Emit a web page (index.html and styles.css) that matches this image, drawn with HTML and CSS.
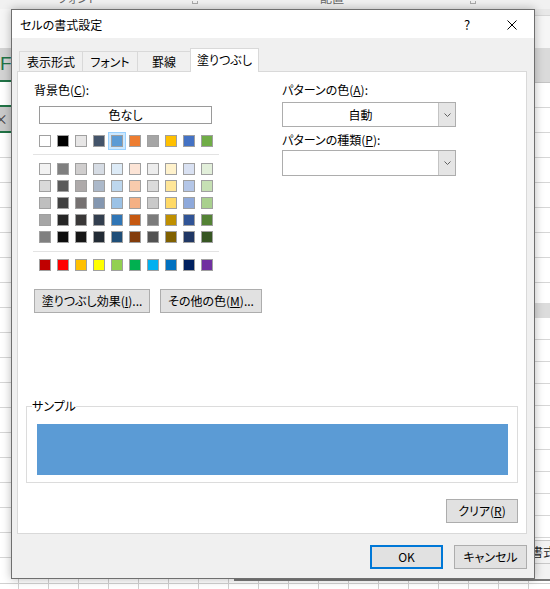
FILE: index.html
```html
<!DOCTYPE html>
<html lang="ja">
<head>
<meta charset="utf-8">
<title>セルの書式設定</title>
<link rel="stylesheet" href="styles.css">
</head>
<body>
<div class="sheet">
  <div class="ribbon">
    <span></span>
    <span class="grp">フォント</span>
    <span class="launcher"></span>
    <span class="grp">配置</span>
    <span class="launcher"></span>
  </div>
  <div class="middle">
    <div class="strip strip-left">
      <div class="cell l-top"></div>
      <div class="cell l-head">F</div>
      <div class="cell l-sel"></div>
      <div class="cell l-fx">×</div>
      <div class="cell l-rows"></div>
    </div>
    <div class="center"></div>
    <div class="strip strip-right">
      <div class="cell r-a"></div>
      <div class="cell r-b"></div>
      <div class="cell r-head"></div>
      <div class="cell r-rows1"></div>
      <div class="cell r-band"></div>
      <div class="cell r-rows2"></div>
      <div class="cell r-fmt">書式</div>
      <div class="cell r-end"></div>
    </div>
  </div>
  <div class="bottom-strip">
    <div class="tabbar-edge"></div>
  </div>
</div>

<div class="dialog">
  <div class="titlebar">
    <span class="title">セルの書式設定</span>
    <span class="help">?</span>
    <span class="close"><svg width="10" height="10" viewBox="0 0 10 10"><path d="M0.5 0.5 L9.5 9.5 M9.5 0.5 L0.5 9.5" stroke="#000" stroke-width="1" fill="none"/></svg></span>
  </div>
  <div class="tabs">
    <div class="tab t1">表示形式</div>
    <div class="tab t2">フォント</div>
    <div class="tab t3">罫線</div>
    <div class="tab t4 active">塗りつぶし</div>
  </div>
  <div class="panel">
    <div class="cols">
      <div class="left">
        <div class="label">背景色(<u>C</u>):</div>
        <div class="nocolor">色なし</div>
        <div class="swatches">
          <div class="grid">
            <span class="sw" style="background:#FFFFFF"></span>
            <span class="sw" style="background:#000000"></span>
            <span class="sw" style="background:#E7E6E6"></span>
            <span class="sw" style="background:#44546A"></span>
            <span class="sw selected" style="background:#5B9BD5"></span>
            <span class="sw" style="background:#ED7D31"></span>
            <span class="sw" style="background:#A5A5A5"></span>
            <span class="sw" style="background:#FFC000"></span>
            <span class="sw" style="background:#4472C4"></span>
            <span class="sw" style="background:#70AD47"></span>
          </div>
          <div class="sep"></div>
          <div class="grid shades">
            <span class="sw" style="background:#F2F2F2"></span>
            <span class="sw" style="background:#7F7F7F"></span>
            <span class="sw" style="background:#D0CECE"></span>
            <span class="sw" style="background:#D6DCE4"></span>
            <span class="sw" style="background:#DDEBF7"></span>
            <span class="sw" style="background:#FCE4D6"></span>
            <span class="sw" style="background:#EDEDED"></span>
            <span class="sw" style="background:#FFF2CC"></span>
            <span class="sw" style="background:#D9E1F2"></span>
            <span class="sw" style="background:#E2EFDA"></span>

            <span class="sw" style="background:#D9D9D9"></span>
            <span class="sw" style="background:#595959"></span>
            <span class="sw" style="background:#AEAAAA"></span>
            <span class="sw" style="background:#ACB9CA"></span>
            <span class="sw" style="background:#BDD7EE"></span>
            <span class="sw" style="background:#F8CBAD"></span>
            <span class="sw" style="background:#DBDBDB"></span>
            <span class="sw" style="background:#FFE699"></span>
            <span class="sw" style="background:#B4C6E7"></span>
            <span class="sw" style="background:#C6E0B4"></span>

            <span class="sw" style="background:#BFBFBF"></span>
            <span class="sw" style="background:#404040"></span>
            <span class="sw" style="background:#757171"></span>
            <span class="sw" style="background:#8497B0"></span>
            <span class="sw" style="background:#9BC2E6"></span>
            <span class="sw" style="background:#F4B084"></span>
            <span class="sw" style="background:#C9C9C9"></span>
            <span class="sw" style="background:#FFD966"></span>
            <span class="sw" style="background:#8EA9DB"></span>
            <span class="sw" style="background:#A9D08E"></span>

            <span class="sw" style="background:#A6A6A6"></span>
            <span class="sw" style="background:#262626"></span>
            <span class="sw" style="background:#3A3838"></span>
            <span class="sw" style="background:#333F4F"></span>
            <span class="sw" style="background:#2F75B5"></span>
            <span class="sw" style="background:#C65911"></span>
            <span class="sw" style="background:#7B7B7B"></span>
            <span class="sw" style="background:#BF8F00"></span>
            <span class="sw" style="background:#305496"></span>
            <span class="sw" style="background:#548235"></span>

            <span class="sw" style="background:#808080"></span>
            <span class="sw" style="background:#0D0D0D"></span>
            <span class="sw" style="background:#161616"></span>
            <span class="sw" style="background:#222B35"></span>
            <span class="sw" style="background:#1F4E78"></span>
            <span class="sw" style="background:#833C0C"></span>
            <span class="sw" style="background:#525252"></span>
            <span class="sw" style="background:#806000"></span>
            <span class="sw" style="background:#203764"></span>
            <span class="sw" style="background:#375623"></span>
          </div>
          <div class="sep sep2"></div>
          <div class="grid std">
            <span class="sw" style="background:#C00000"></span>
            <span class="sw" style="background:#FF0000"></span>
            <span class="sw" style="background:#FFC000"></span>
            <span class="sw" style="background:#FFFF00"></span>
            <span class="sw" style="background:#92D050"></span>
            <span class="sw" style="background:#00B050"></span>
            <span class="sw" style="background:#00B0F0"></span>
            <span class="sw" style="background:#0070C0"></span>
            <span class="sw" style="background:#002060"></span>
            <span class="sw" style="background:#7030A0"></span>
          </div>
        </div>
        <div class="btnrow">
          <button class="btn b-effect">塗りつぶし効果(<u>I</u>)...</button>
          <button class="btn b-more">その他の色(<u>M</u>)...</button>
        </div>
      </div>
      <div class="right">
        <div class="label">パターンの色(<u>A</u>):</div>
        <div class="combo c1">
          <span class="value">自動</span>
          <span class="arrow"><svg width="7" height="4" viewBox="0 0 7 4"><polyline points="0.5,0.5 3.5,3.5 6.5,0.5" fill="none" stroke="#606060" stroke-width="1"/></svg></span>
        </div>
        <div class="label label2">パターンの種類(<u>P</u>):</div>
        <div class="combo c2">
          <span class="value"></span>
          <span class="arrow"><svg width="7" height="4" viewBox="0 0 7 4"><polyline points="0.5,0.5 3.5,3.5 6.5,0.5" fill="none" stroke="#606060" stroke-width="1"/></svg></span>
        </div>
      </div>
    </div>
    <fieldset class="sample">
      <legend>サンプル</legend>
      <div class="sample-fill"></div>
    </fieldset>
    <button class="btn b-clear">クリア(<u>R</u>)</button>
  </div>
  <div class="footer">
    <button class="btn b-ok">OK</button>
    <button class="btn b-cancel">キャンセル</button>
  </div>
</div>
</body>
</html>
```
FILE: styles.css
```css
* { box-sizing: border-box; }
html, body { margin: 0; padding: 0; }
body {
  width: 550px;
  height: 589px;
  overflow: hidden;
  position: relative;
  background: #ffffff;
  font-family: "Noto Sans CJK JP", "Noto Sans", sans-serif;
  font-size: 12px;
  color: #000;
  font-feature-settings: "palt";
}
u { text-decoration: underline; text-underline-offset: 1px; }

/* ---------- background spreadsheet ---------- */
.sheet { display: flex; flex-direction: column; height: 589px; }
.ribbon {
  height: 9px; flex: none; overflow: hidden;
  background: #f1f1f1;
  display: grid;
  grid-template-columns: 58px 134px 128px 150px 1fr;
  color: #666; line-height: 12px;
}
.grp { margin-top: -8px; white-space: nowrap; }
.launcher {
  width: 6px; height: 3px; margin-top: 1px;
  border: 1px solid #aaa; border-top: none;
}
.middle { flex: 1; display: flex; min-height: 0; }
.strip { display: flex; flex-direction: column; overflow: hidden; }
.strip-left { width: 11px; }
.center { flex: 1; }
.strip-right { width: 15px; }
.cell { flex: none; }
.l-top { height: 39px; background: #f6f6f6; }
.l-head {
  height: 34px; background: #d3d3d3; color: #217346;
  font-family: "Liberation Sans", sans-serif; font-size: 19px; line-height: 32px;
  border-bottom: 2px solid #217346; padding-left: 0;
}
.l-sel { height: 25px; background: #fff; border-bottom: 2px solid #217346; }
.l-fx {
  height: 26px; background: #c9c9c9; color: #444;
  border-bottom: 2px solid #217346;
  font-size: 14px; line-height: 22px; margin-left: 0; text-indent: -6px;
}
.l-rows {
  flex: 1;
  background: repeating-linear-gradient(to bottom, #fff 0 24px, #d6d6d6 24px 25px);
}
.r-a { height: 6px; background: #e8e8e8; }
.r-b { height: 33px; background: #f6f6f6; border-top: 1px solid #d6d6d6; }
.r-head { height: 35px; background: #dadada; border-bottom: 1px solid #c4c4c4; }
.r-rows1 {
  height: 220px;
  background: repeating-linear-gradient(to bottom, #fff 0 24px, #d6d6d6 24px 25px);
}
.r-band { height: 15px; background: #dcdcdc; }
.r-rows2 {
  height: 222px;
  background: repeating-linear-gradient(to bottom, #fff 0 21px, #d6d6d6 21px 22px);
}
.r-fmt {
  height: 24px; border-top: 1px solid #c8c8c8; border-bottom: 1px solid #c8c8c8;
  background: #f3f3f3; white-space: nowrap; line-height: 22px; text-indent: -4px; color: #222;
}
.r-end { flex: 1; background: #f3f3f3; }
.bottom-strip {
  height: 10px; flex: none; position: relative;
  background:
    linear-gradient(to bottom, transparent 0 4px, #d0d0d0 4px 5px, transparent 5px),
    repeating-linear-gradient(to right, #fff 0 18px, #cfcfcf 18px 19px, #fff 19px 30px);
}
.tabbar-edge { margin-left: 234px; height: 2px; background: #7a7a7a; }

/* ---------- dialog ---------- */
.dialog {
  position: absolute; left: 11px; top: 9px;
  width: 524px; height: 570px;
  border: 1px solid #6f6f6f;
  background: #f0f0f0;
  box-shadow: 0 0 9px rgba(0, 0, 0, 0.28);
  display: flex; flex-direction: column;
}
.titlebar {
  height: 28px; flex: none; background: #fff;
  display: flex; align-items: center;
  padding-left: 8px; padding-right: 17px;
}
.title { flex: 1; line-height: 16px; padding-top: 1px; }
.help { width: 20px; text-align: center; font-size: 13px; line-height: 16px; margin-right: 30px; margin-top: 1px; }
.close { width: 10px; height: 10px; display: flex; margin-top: 2px; }

.tabs {
  margin-top: 10px; padding-left: 7px;
  height: 23px; flex: none;
  display: flex; align-items: flex-end;
}
.tab {
  height: 20px; border: 1px solid #d9d9d9; border-bottom: none;
  background: #f0f0f0; text-align: center; line-height: 19px;
  margin-left: -1px;
}
.t1 { width: 64px; margin-left: 0; }
.t2 { width: 56px; }
.t3 { width: 54px; }
.t4 { width: 69px; }
.tab.active {
  height: 24px; margin-bottom: -1px; background: #fff;
  position: relative; z-index: 1; line-height: 22px;
}

.panel {
  margin-left: 5px; width: 510px; height: 463px; flex: none;
  border: 1px solid #d9d9d9; background: #fff;
  display: flex; flex-direction: column;
  padding-bottom: 10px;
}
.cols { display: flex; height: 241px; flex: none; }
.left { width: 264px; padding-top: 10px; display: flex; flex-direction: column; align-items: flex-start; }
.right { flex: 1; padding-top: 10px; display: flex; flex-direction: column; align-items: flex-start; }
.label { line-height: 16px; height: 16px; white-space: nowrap; }
.left .label { margin-left: 16px; }
.nocolor {
  margin-top: 8px; margin-left: 21px;
  width: 173px; height: 18px;
  border: 1px solid #9a9a9a; background: #fff;
  text-align: center; line-height: 16px;
}
.swatches { margin-top: 11px; margin-left: 15px; width: 186px; }
.grid {
  display: grid; grid-template-columns: repeat(10, 12px);
  column-gap: 6px; row-gap: 5px; padding-left: 6px;
}
.sw { width: 12px; height: 12px; border: 1px solid #a0a0a0; display: block; }
.sw.selected { box-shadow: 0 0 0 2px #cce8ff, 0 0 0 3px #99d1ff; }
.sep { height: 1px; background: #e3e3e3; margin-top: 7px; }
.shades { margin-top: 8px; }
.sep2 { margin-top: 8px; }
.std { margin-top: 7px; }
.btnrow { margin-top: 18px; margin-left: 16px; display: flex; gap: 10px; }

.btn {
  font-family: inherit; font-size: 12px; color: #000;
  font-feature-settings: "palt";
  background: #e1e1e1; border: 1px solid #adadad;
  height: 24px; padding: 0; line-height: 20px;
  display: flex; align-items: center; justify-content: center;
  white-space: nowrap; border-radius: 0;
}
.b-effect { width: 116px; }
.b-more { width: 102px; }

.combo {
  width: 174px; display: flex;
  border: 1px solid #adadad; background: #fff;
}
.c1 { margin-top: 4px; height: 25px; }
.c2 { margin-top: 2px; height: 26px; }
.label2 { margin-top: 5px; }
.value { flex: 1; text-align: center; line-height: 23px; }
.arrow {
  width: 17px; background: #e5e5e5; border-left: 1px solid #c4c4c4;
  display: flex; align-items: center; justify-content: center;
}

.sample {
  margin: auto 8px 0 8px;
  width: 492px; min-width: 0;
  border: 1px solid #dcdcdc;
  padding: 10px 9px 7px 10px;
}
.sample legend {
  padding: 0; margin-left: -5px;
  line-height: 16px;
}
.sample-fill { height: 51px; background: #5b9bd5; }
.b-clear { align-self: flex-end; margin-top: 16px; margin-right: 8px; width: 72px; }

.footer {
  margin-top: 11px; padding-right: 7px;
  display: flex; justify-content: flex-end; gap: 11px;
}
.b-ok { width: 73px; border: 2px solid #0078d7; }
.b-cancel { width: 73px; }
```
